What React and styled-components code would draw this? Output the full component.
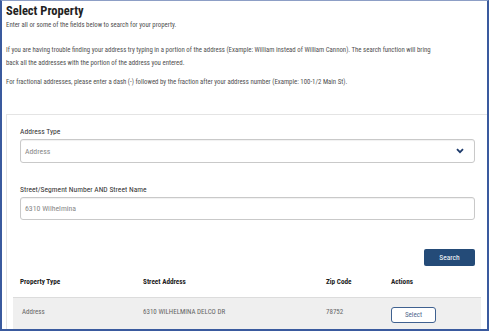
import React from 'react';
import styled, { createGlobalStyle } from 'styled-components';

const GlobalStyle = createGlobalStyle`
  html, body {
    margin: 0;
    padding: 0;
    background: #ffffff;
  }
  body {
    font-family: "Roboto Condensed", "Roboto", "Liberation Sans", sans-serif;
    color: #444;
  }
`;

const Frame = styled.div`
  box-sizing: border-box;
  width: 489px;
  height: 331px;
  border: 2px solid #3a5a9e;
  border-top: 1px solid #8d9fc6;
  overflow: hidden;
  background: #fff;
`;

const Intro = styled.header`
  padding: 2px 0 0 4px;
`;

const Title = styled.h1`
  margin: 0;
  font-size: 12.5px;
  line-height: 16px;
  font-weight: 700;
  color: #222;
`;

const Note = styled.p`
  margin: ${p => p.$top || 0}px 0 0;
  font-size: 6.8px;
  line-height: 13px;
  color: #4f4f4f;
  white-space: nowrap;
`;

const Card = styled.section`
  margin: 25px 0 0 4px;
  border: 1px solid #e4e4e4;
  border-right: none;
  border-bottom: none;
  padding: 11px 12px 0 13px;
`;

const Field = styled.div`
  display: flex;
  flex-direction: column;
  gap: 1px;
  margin-bottom: ${p => p.$after || 0}px;
`;

const Label = styled.label`
  font-size: 7.6px;
  line-height: 12px;
  color: #333;
`;

const Control = styled.div`
  box-sizing: border-box;
  height: ${p => p.$h}px;
  border: 1px solid #c9c9c9;
  border-radius: 3px;
  box-shadow: inset 0 1px 1px rgba(0, 0, 0, 0.06);
  display: flex;
  align-items: center;
  justify-content: space-between;
  padding: 0 10px 0 4px;
  font-size: 7.8px;
  color: #888;
`;

const Actions = styled.div`
  display: flex;
  justify-content: flex-end;
  margin-top: 29px;
`;

const SearchButton = styled.button`
  width: 51px;
  height: 17px;
  border: none;
  border-radius: 2px;
  background: #244b78;
  color: #fff;
  font-family: inherit;
  font-size: 7.5px;
  padding: 0;
`;

const Table = styled.div`
  margin: 0 -6px 0 -7px;
`;

const Row = styled.div`
  display: grid;
  grid-template-columns: 123px 183px 65px 1fr;
  align-items: ${p => (p.$head ? 'center' : 'start')};
  height: ${p => (p.$head ? 31 : 34)}px;
  background: ${p => (p.$head ? 'transparent' : '#efefef')};
  border-top: ${p => (p.$head ? 'none' : '1px solid #dcdcdc')};
  font-size: ${p => (p.$head ? 7.2 : 7)}px;
  line-height: 10px;
  font-weight: ${p => (p.$head ? 700 : 400)};
  color: ${p => (p.$head ? '#222' : '#666')};
`;

const Cell = styled.div`
  padding-left: ${p => p.$pad ?? 7}px;
  padding-top: ${p => p.$top || 0}px;
  white-space: nowrap;
`;

const SelectButton = styled.button`
  width: 45px;
  height: 16px;
  margin-top: 9px;
  background: #fff;
  border: 1px solid #3f6190;
  border-radius: 3px;
  color: #50688d;
  font-family: inherit;
  font-size: 7px;
  padding: 0;
`;

const Chevron = () => (
  <svg width="8" height="6" viewBox="0 0 8 6">
    <polyline points="1,1.2 4,4.2 7,1.2" fill="none" stroke="#1d3a6b" strokeWidth="1.8" />
  </svg>
);

export default function App() {
  return (
    <>
      <GlobalStyle />
      <Frame>
        <Intro>
          <Title>Select Property</Title>
          <Note>Enter all or some of the fields below to search for your property.</Note>
          <Note $top={12}>
            If you are having trouble finding your address try typing in a portion of the address (Example: William instead of William Cannon). The search function will bring
            <br />
            back all the addresses with the portion of the address you entered.
          </Note>
          <Note $top={6}>
            For fractional addresses, please enter a dash (-) followed by the fraction after your address number (Example: 100-1/2 Main St).
          </Note>
        </Intro>
        <Card>
          <Field $after={21}>
            <Label>Address Type</Label>
            <Control $h={24}>
              <span>Address</span>
              <Chevron />
            </Control>
          </Field>
          <Field>
            <Label>Street/Segment Number AND Street Name</Label>
            <Control $h={23}>
              <span>6310 Wilhelmina</span>
            </Control>
          </Field>
          <Actions>
            <SearchButton>Search</SearchButton>
          </Actions>
          <Table>
            <Row $head>
              <Cell>Property Type</Cell>
              <Cell>Street Address</Cell>
              <Cell>Zip Code</Cell>
              <Cell>Actions</Cell>
            </Row>
            <Row>
              <Cell $pad={9} $top={9}>Address</Cell>
              <Cell $top={9}>6310 WILHELMINA DELCO DR</Cell>
              <Cell $top={9}>78752</Cell>
              <Cell>
                <SelectButton>Select</SelectButton>
              </Cell>
            </Row>
          </Table>
        </Card>
      </Frame>
    </>
  );
}
